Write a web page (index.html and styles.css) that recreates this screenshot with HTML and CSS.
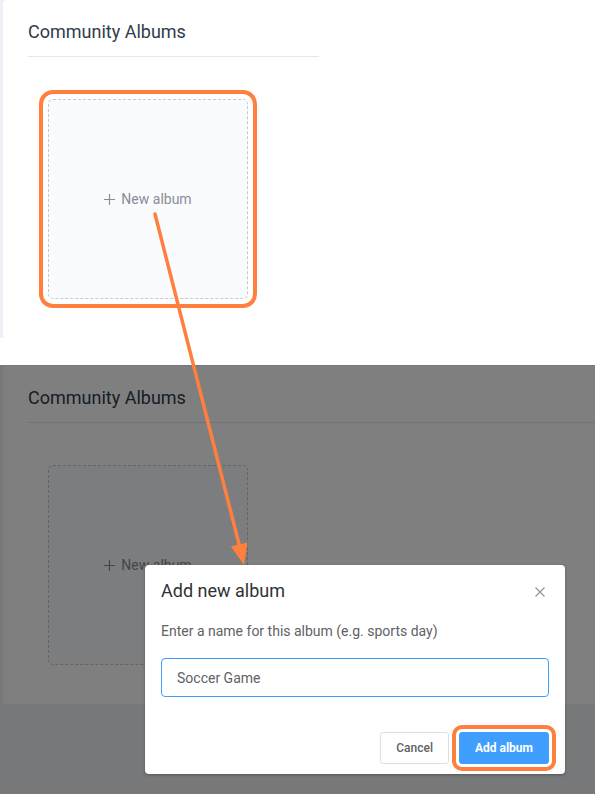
FILE: index.html
```html
<!DOCTYPE html>
<html lang="en">
<head>
  <meta charset="UTF-8">
  <meta name="viewport" content="width=device-width, initial-scale=1.0">
  <title>Community Albums - New album</title>
  <link rel="stylesheet" href="styles.css">
</head>
<body>
  <div class="page">
    <!-- step 1: album list -->
    <section class="shot shot-before">
      <div class="panel">
        <h2 class="panel-title">Community Albums</h2>
        <div class="album-grid">
          <div class="album-new is-marked">
            <svg class="plus" width="11" height="11" viewBox="0 0 11 11"><path d="M5.5 0v11M0 5.5h11" /></svg>
            <span>New album</span>
          </div>
        </div>
      </div>
    </section>

    <!-- step 2: dialog open -->
    <section class="shot shot-after">
      <div class="panel">
        <h2 class="panel-title">Community Albums</h2>
        <div class="album-grid">
          <div class="album-new">
            <svg class="plus" width="11" height="11" viewBox="0 0 11 11"><path d="M5.5 0v11M0 5.5h11" /></svg>
            <span>New album</span>
          </div>
        </div>
      </div>
      <div class="mask"></div>
      <div class="dialog">
        <div class="dialog-header">
          <span class="dialog-title">Add new album</span>
          <button class="dialog-close" aria-label="Close">
            <svg width="10" height="10" viewBox="0 0 10 10"><path d="M0.5 0.5l9 9M9.5 0.5l-9 9" /></svg>
          </button>
        </div>
        <div class="dialog-body">
          <p class="dialog-label">Enter a name for this album (e.g. sports day)</p>
          <input class="dialog-input" type="text" value="Soccer Game">
        </div>
        <div class="dialog-footer">
          <button class="btn">Cancel</button>
          <button class="btn btn-primary is-marked">Add album</button>
        </div>
      </div>
    </section>

    <!-- annotation arrow -->
    <svg class="pointer" width="595" height="794" viewBox="0 0 595 794">
      <line x1="155" y1="214" x2="239.5" y2="546" />
      <polygon points="244,565 247.5,542.4 230.9,546.6" />
    </svg>
  </div>
</body>
</html>
```

FILE: styles.css
```css
body {
  margin: 0;
  background: #fff;
  font-family: Roboto, "Liberation Sans", Arial, sans-serif;
}

.page {
  position: relative;
  width: 595px;
  height: 794px;
  overflow: hidden;
}

.shot {
  display: flex;
  background: #eef1f5;
  box-sizing: border-box;
  padding-left: 3px;
}

.shot-before {
  width: 319px;
  height: 338px;
}

.shot-after {
  position: relative;
  margin-top: 27px;
  height: 429px;
  padding-top: 1px;
  align-items: flex-start;
}

.panel {
  flex: 1;
  height: 338px;
  box-sizing: border-box;
  background: #fff;
  border-radius: 4px 0 0 4px;
  padding: 20px 0 0 25px;
}

.panel-title {
  margin: 0;
  padding-bottom: 12px;
  border-bottom: 1px solid #e4e7ed;
  font-size: 18px;
  font-weight: 400;
  line-height: 24px;
  color: #2f3b4c;
}

.album-grid {
  padding: 42px 0 0 20px;
}

.album-new {
  width: 200px;
  height: 200px;
  box-sizing: border-box;
  display: flex;
  align-items: center;
  justify-content: center;
  gap: 6px;
  border: 1px dashed #c3c9d2;
  border-radius: 5px;
  background: #f9fbfd;
  color: #878d96;
  font-size: 14px;
}

.plus {
  stroke: #878d96;
  stroke-width: 1.2;
}

.is-marked {
  outline: 4px solid #ff7f3f;
  outline-offset: 5px;
}

.mask {
  position: absolute;
  top: 0;
  left: 0;
  right: 0;
  bottom: 0;
  background: rgba(0, 0, 0, 0.5);
}

.dialog {
  position: absolute;
  left: 145px;
  top: 200px;
  width: 420px;
  background: #fff;
  border-radius: 4px;
  box-shadow: 0 1px 3px rgba(0, 0, 0, 0.3);
}

.dialog-header {
  display: flex;
  justify-content: space-between;
  align-items: center;
  padding: 14px 16px 0;
}

.dialog-title {
  font-size: 18px;
  line-height: 24px;
  color: #303133;
}

.dialog-close {
  margin: 2px 4px 0 0;
  padding: 0;
  border: none;
  background: none;
  line-height: 0;
}

.dialog-close svg {
  stroke: #909399;
  stroke-width: 1.2;
}

.dialog-body {
  padding: 18px 16px 0;
}

.dialog-label {
  margin: 0 0 17px;
  font-size: 14px;
  line-height: 20px;
  color: #606266;
}

.dialog-input {
  width: 100%;
  height: 39px;
  box-sizing: border-box;
  padding: 0 15px;
  border: 1px solid #409eff;
  border-radius: 4px;
  font-family: inherit;
  font-size: 14px;
  color: #606266;
  outline: none;
}

.dialog-footer {
  display: flex;
  justify-content: flex-end;
  gap: 10px;
  padding: 35px 16px 10px;
}

.btn {
  height: 32px;
  padding: 0 15px;
  border: 1px solid #dcdfe6;
  border-radius: 3px;
  background: #fff;
  font-family: inherit;
  font-size: 12px;
  font-weight: 500;
  color: #606266;
}

.btn-primary {
  background: #409eff;
  border-color: #409eff;
  color: #fff;
  font-weight: 700;
}

.btn.is-marked {
  outline-width: 4px;
  outline-offset: 3px;
}

.pointer {
  position: absolute;
  top: 0;
  left: 0;
  pointer-events: none;
}

.pointer line {
  stroke: #ff7f3f;
  stroke-width: 3.5;
  stroke-linecap: round;
}

.pointer polygon {
  fill: #ff7f3f;
}
```
